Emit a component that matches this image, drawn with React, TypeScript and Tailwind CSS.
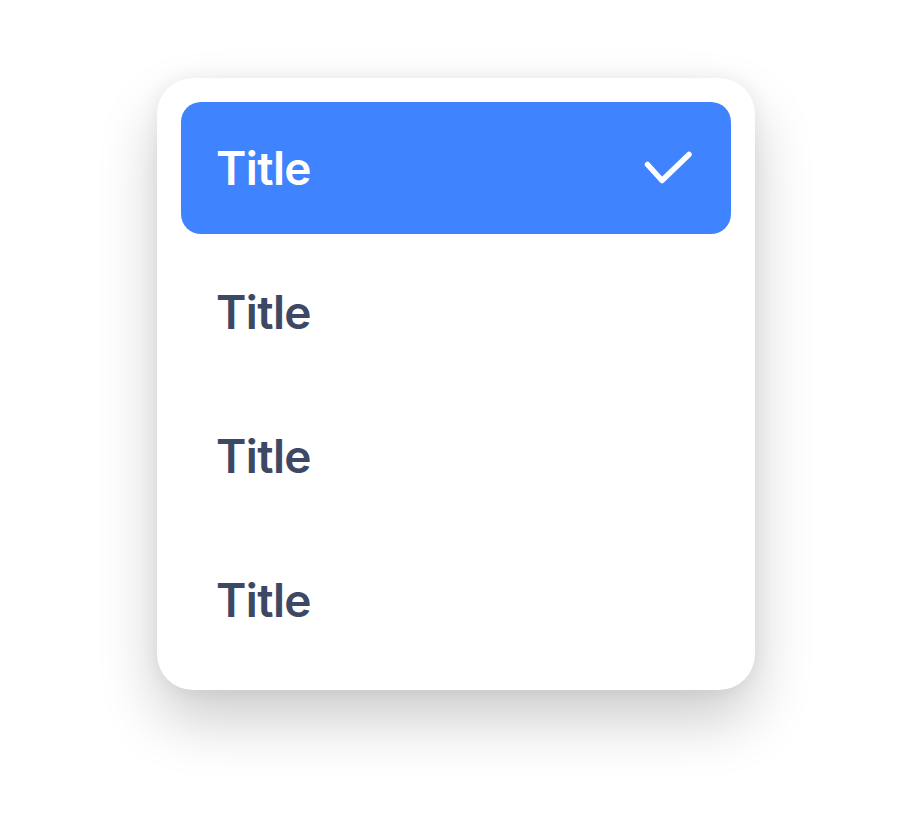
const items = ["Title", "Title", "Title", "Title"];

const Check = () => (
    <svg width="48" height="34" viewBox="0 0 48 34" fill="none">
        <path
            d="M3.5 13.5L18 29.5L45 3.5"
            stroke="white"
            strokeWidth="5.5"
            strokeLinecap="round"
            strokeLinejoin="round"
        />
    </svg>
);

const App = () => {
    const selected = 0;
    return (
        <div className="flex min-h-[834px] w-full justify-center bg-white pt-[78px] font-['Inter',sans-serif]">
            <ul className="flex h-[612px] w-[598px] flex-col gap-3 rounded-[36px] bg-white p-6 shadow-[0_30px_60px_rgba(0,0,0,0.2),0_0_20px_rgba(0,0,0,0.06)]">
                {items.map((title, i) => (
                    <li
                        key={i}
                        className={`flex h-[132px] shrink-0 items-center justify-between rounded-[20px] pl-[35px] pr-[39px] ${
                            i === selected ? "bg-[#4083ff] text-white" : "text-[#3d4964]"
                        }`}
                    >
                        <span className="text-[46px] font-semibold leading-none tracking-[-0.6px]">
                            {title}
                        </span>
                        {i === selected && <Check />}
                    </li>
                ))}
            </ul>
        </div>
    );
};

export default App;
